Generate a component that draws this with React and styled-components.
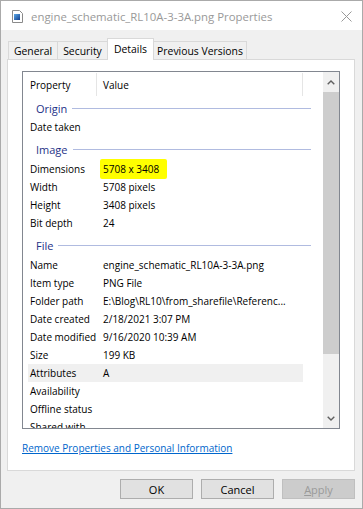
import React from "react";
import styled, { createGlobalStyle } from "styled-components";

const GlobalStyle = createGlobalStyle`
  html, body { margin: 0; padding: 0; background: #fff; }
  body { font-family: "Open Sans", "Noto Sans", sans-serif; font-size: 10px; color: #000; }
  * { box-sizing: border-box; }
`;

const Window = styled.div`
  width: 363px;
  height: 509px;
  background: #f0f0f0;
  border: 1px solid #aaaaaa;
  display: flex;
  flex-direction: column;
  padding: 0 7px 0 6px;
`;

const TitleBar = styled.div`
  height: 29px;
  margin: 0 -7px 0 -6px;
  background: #fff;
  display: flex;
  align-items: center;
  padding: 1px 10px 0 11px;
`;

const TitleText = styled.div`
  margin-left: 8px;
  font-size: 11.4px;
  color: #999999;
  flex: 1;
  white-space: nowrap;
`;

const TabRow = styled.div`
  margin-top: 8px;
  height: 21px;
  display: flex;
  align-items: flex-end;
  padding-left: 1px;
  position: relative;
  z-index: 1;
`;

const Tab = styled.div`
  height: ${(p) => (p.$active ? "22px" : "18px")};
  margin-bottom: ${(p) => (p.$active ? "-1px" : "0")};
  margin-left: -1px;
  width: ${(p) => p.$w}px;
  border: 1px solid #d9d9d9;
  border-bottom: none;
  background: ${(p) => (p.$active ? "#ffffff" : "#f0f0f0")};
  display: flex;
  justify-content: center;
  align-items: ${(p) => (p.$active ? "flex-start" : "center")};
  padding-top: ${(p) => (p.$active ? "3px" : "1px")};
  white-space: nowrap;
  font-size: 10.4px;
  &:first-child { margin-left: 0; }
`;

const Panel = styled.div`
  height: 412px;
  background: #fff;
  border: 1px solid #d9d9d9;
  padding: 11px 14px 0 14px;
  display: flex;
  flex-direction: column;
`;

const ListBox = styled.div`
  width: 318px;
  height: 358px;
  border: 1px solid #828790;
  display: flex;
  background: #fff;
`;

const ListContent = styled.div`
  flex: 1;
  overflow: hidden;
  display: flex;
  flex-direction: column;
`;

const HeaderRow = styled.div`
  flex: none;
  height: 24px;
  display: grid;
  grid-template-columns: 74px 206px;
  align-items: stretch;
`;

const HeaderCell = styled.div`
  position: relative;
  padding-left: ${(p) => p.$pad}px;
  display: flex;
  align-items: center;
  padding-top: 1px;
  &::after {
    content: "";
    position: absolute;
    right: 0;
    top: 1px;
    bottom: 0;
    width: 1px;
    background: #e5e5e5;
  }
`;

const GroupRow = styled.div`
  flex: none;
  height: ${(p) => p.$h}px;
  width: 283px;
  margin-left: 5px;
  padding-left: 8px;
  display: flex;
  align-items: center;
  padding-top: 2px;
  color: #1e3287;
  font-size: 11px;
  &::after {
    content: "";
    flex: 1;
    height: 1px;
    margin-left: 5px;
    background: #b0bbe0;
  }
`;

const Row = styled.div`
  flex: none;
  height: 18px;
  width: 275px;
  margin-left: 5px;
  display: grid;
  grid-template-columns: 69px 206px;
  align-items: center;
  background: ${(p) => (p.$selected ? "#f0f0f0" : "transparent")};
  white-space: nowrap;
`;

const Label = styled.div`
  padding-left: 2px;
`;

const Value = styled.div`
  padding-left: 6px;
  overflow: visible;
`;

const Highlight = styled.span`
  display: inline-block;
  background: #ffff00;
  margin: -1px 0 -1px -3px;
  height: 20px;
  line-height: 20px;
  padding: 0 8px 0 3px;
  border-radius: 2px;
`;

const Scrollbar = styled.div`
  width: 16px;
  background: #f0f0f0;
  display: flex;
  flex-direction: column;
`;

const ScrollButton = styled.div`
  height: ${(p) => p.$h}px;
  display: flex;
  align-items: center;
  justify-content: center;
`;

const Thumb = styled.div`
  height: 262px;
  background: #cdcdcd;
`;

const Track = styled.div`
  flex: 1;
`;

const Link = styled.a`
  margin-top: 12px;
  color: #0066cc;
  text-decoration: underline;
  line-height: 14px;
  align-self: flex-start;
`;

const ButtonRow = styled.div`
  margin-top: 8px;
  display: flex;
  justify-content: flex-end;
  gap: 8px;
`;

const Button = styled.div`
  width: 73px;
  height: 20px;
  border: 1px solid ${(p) => (p.$disabled ? "#bfbfbf" : "#adadad")};
  background: ${(p) => (p.$disabled ? "#cccccc" : "#e1e1e1")};
  color: ${(p) => (p.$disabled ? "#9a9a9a" : "#000")};
  display: flex;
  align-items: center;
  justify-content: center;
  font-size: 11px;
  u { text-decoration: underline; }
`;

const FileIcon = () => (
  <svg width="11" height="13" viewBox="0 0 11 13">
    <path d="M0.5 0.5 H7.5 L10.5 3.5 V12.5 H0.5 Z" fill="#fff" stroke="#8a8a8a" />
    <defs>
      <linearGradient id="g" x1="0" y1="0" x2="1" y2="1">
        <stop offset="0" stopColor="#5aa8e8" />
        <stop offset="1" stopColor="#123e8c" />
      </linearGradient>
    </defs>
    <rect x="2" y="4" width="6" height="6" fill="url(#g)" />
  </svg>
);

const CloseIcon = () => (
  <svg width="11" height="11" viewBox="0 0 11 11">
    <path d="M0.5 0.5 L10.5 10.5 M10.5 0.5 L0.5 10.5" stroke="#999" strokeWidth="1" />
  </svg>
);

const Chevron = ({ up }) => (
  <svg width="8" height="5" viewBox="0 0 8 5">
    <path
      d={up ? "M0.7 4.3 L4 1 L7.3 4.3" : "M0.7 0.7 L4 4 L7.3 0.7"}
      fill="none"
      stroke="#606060"
      strokeWidth="1.4"
    />
  </svg>
);

const rows = [
  { group: "Origin", h: 22 },
  { k: "Date taken", v: "" },
  { group: "Image", h: 24 },
  { k: "Dimensions", v: "5708 x 3408", hl: true },
  { k: "Width", v: "5708 pixels" },
  { k: "Height", v: "3408 pixels" },
  { k: "Bit depth", v: "24" },
  { group: "File", h: 24 },
  { k: "Name", v: "engine_schematic_RL10A-3-3A.png" },
  { k: "Item type", v: "PNG File" },
  { k: "Folder path", v: "E:\\Blog\\RL10\\from_sharefile\\Referenc..." },
  { k: "Date created", v: "2/18/2021 3:07 PM" },
  { k: "Date modified", v: "9/16/2020 10:39 AM" },
  { k: "Size", v: "199 KB" },
  { k: "Attributes", v: "A", sel: true },
  { k: "Availability", v: "" },
  { k: "Offline status", v: "" },
  { k: "Shared with", v: "" },
];

export default function App() {
  return (
    <>
      <GlobalStyle />
      <Window>
        <TitleBar>
          <FileIcon />
          <TitleText>engine_schematic_RL10A-3-3A.png Properties</TitleText>
          <CloseIcon />
        </TitleBar>
        <TabRow>
          <Tab $w={50}>General</Tab>
          <Tab $w={51}>Security</Tab>
          <Tab $w={47} $active>Details</Tab>
          <Tab $w={94}>Previous Versions</Tab>
        </TabRow>
        <Panel>
          <ListBox>
            <ListContent>
              <HeaderRow>
                <HeaderCell $pad={7}>Property</HeaderCell>
                <HeaderCell $pad={6}>Value</HeaderCell>
              </HeaderRow>
              {rows.map((r, i) =>
                r.group ? (
                  <GroupRow key={i} $h={r.h}>{r.group}</GroupRow>
                ) : (
                  <Row key={i} $selected={r.sel}>
                    <Label>{r.k}</Label>
                    <Value>{r.hl ? <Highlight>{r.v}</Highlight> : r.v}</Value>
                  </Row>
                )
              )}
            </ListContent>
            <Scrollbar>
              <ScrollButton $h={20}><Chevron up /></ScrollButton>
              <Thumb />
              <Track />
              <ScrollButton $h={20}><Chevron /></ScrollButton>
            </Scrollbar>
          </ListBox>
          <Link>Remove Properties and Personal Information</Link>
        </Panel>
        <ButtonRow>
          <Button>OK</Button>
          <Button>Cancel</Button>
          <Button $disabled><span><u>A</u>pply</span></Button>
        </ButtonRow>
      </Window>
    </>
  );
}
